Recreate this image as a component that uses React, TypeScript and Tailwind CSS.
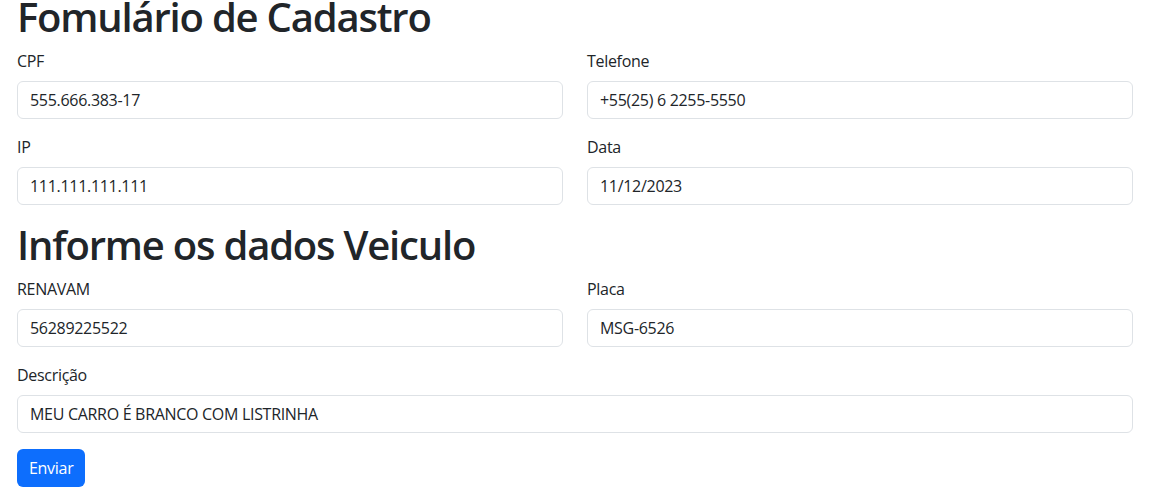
import React from 'react';

function Field({ label, value }: { label: string; value: string }) {
  return (
    <div className="mb-4">
      <label className="block mb-2 text-base leading-6 tracking-[-0.3px] text-[#212529]">{label}</label>
      <input
        readOnly
        value={value}
        className="block w-full h-[38px] px-3 py-1.5 text-base leading-6 tracking-[-0.3px] text-[#212529] bg-white border border-[#dee2e6] rounded-md outline-none"
      />
    </div>
  );
}

export default function App() {
  return (
    <div className="min-h-screen bg-white text-[#212529] font-['Open_Sans',sans-serif]">
      <div className="pl-[17px] w-[1133px]">
        <h1 className="text-[40px] leading-[48px] font-semibold tracking-[-1.2px] -mt-[7px] mb-2">Fomulário de Cadastro</h1>
        <div className="grid grid-cols-2 gap-x-6">
          <Field label="CPF" value="555.666.383-17" />
          <Field label="Telefone" value="+55(25) 6 2255-5550" />
          <Field label="IP" value="111.111.111.111" />
          <Field label="Data" value="11/12/2023" />
        </div>
        <h1 className="text-[40px] leading-[48px] font-semibold tracking-[-1.2px] mb-2">Informe os dados Veiculo</h1>
        <div className="grid grid-cols-2 gap-x-6">
          <Field label="RENAVAM" value="56289225522" />
          <Field label="Placa" value="MSG-6526" />
        </div>
        <Field label="Descrição" value="MEU CARRO É BRANCO COM LISTRINHA" />
        <button className="h-[38px] px-3 text-base leading-6 tracking-[-0.3px] text-white bg-[#0d6efd] rounded-md">Enviar</button>
      </div>
    </div>
  );
}
